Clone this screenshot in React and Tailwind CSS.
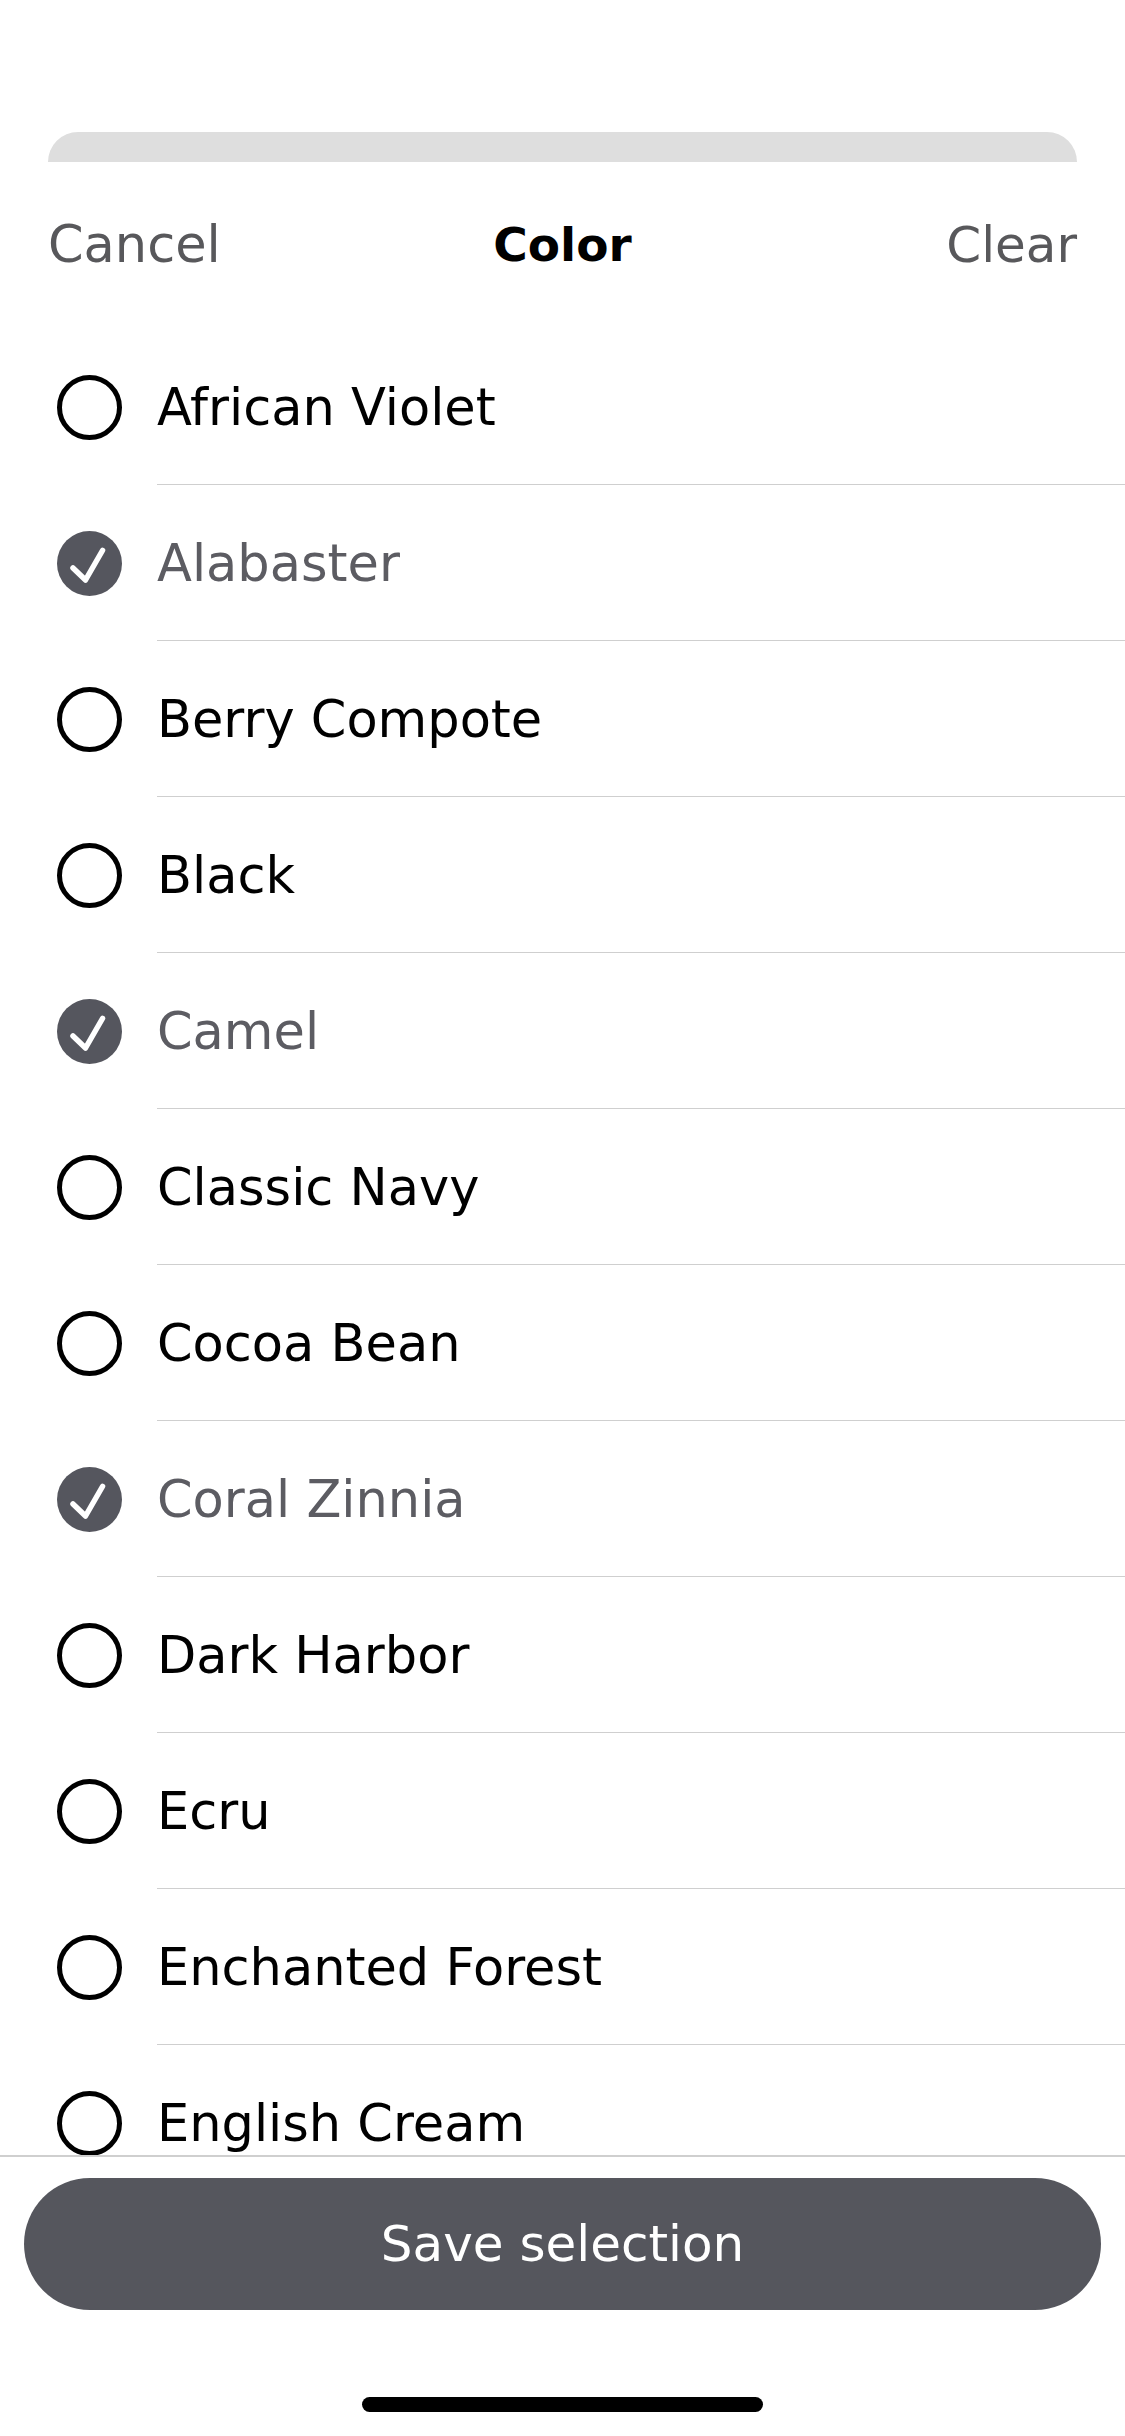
import React, { useState } from 'react';

const colors = [
  { name: 'African Violet', checked: false },
  { name: 'Alabaster', checked: true },
  { name: 'Berry Compote', checked: false },
  { name: 'Black', checked: false },
  { name: 'Camel', checked: true },
  { name: 'Classic Navy', checked: false },
  { name: 'Cocoa Bean', checked: false },
  { name: 'Coral Zinnia', checked: true },
  { name: 'Dark Harbor', checked: false },
  { name: 'Ecru', checked: false },
  { name: 'Enchanted Forest', checked: false },
  { name: 'English Cream', checked: false },
];

const font = { fontFamily: '"DejaVu Sans", "Noto Sans", sans-serif' };

const CheckCircle = ({ checked }) =>
  checked ? (
    <svg width="65" height="65" viewBox="0 0 65 65">
      <circle cx="32.5" cy="32.5" r="32.5" fill="#55565e" />
      <path d="M16 37 L28.5 49 L45.5 19.5" fill="none" stroke="#fff" strokeWidth="5.5" strokeLinecap="round" strokeLinejoin="round" />
    </svg>
  ) : (
    <div className="w-[65px] h-[65px] rounded-full border-[5px] border-black" />
  );

export default function App() {
  const [items, setItems] = useState(colors);

  const toggle = (name) =>
    setItems((prev) => prev.map((c) => (c.name === name ? { ...c, checked: !c.checked } : c)));

  return (
    <div className="w-[1125px] h-[2436px] bg-white flex flex-col overflow-hidden" style={font}>
      {/* top spacer + sheet grabber */}
      <div className="h-[132px] shrink-0" />
      <div className="mx-[48px] h-[30px] shrink-0 rounded-t-[30px] bg-[#dedede]" />

      {/* Header */}
      <div className="h-[167px] shrink-0 px-[48px] grid grid-cols-3 items-center">
        <button className="text-left text-[51px] text-[#58585b]">Cancel</button>
        <p className="text-center text-[47px] font-bold text-black">Color</p>
        <button className="text-right text-[50px] text-[#58585b]">Clear</button>
      </div>

      {/* List */}
      <div className="flex-1 overflow-hidden">
        {items.map((c) => (
          <div key={c.name} onClick={() => toggle(c.name)} className="h-[156px] flex items-stretch">
            <div className="w-[157px] shrink-0 flex items-center pl-[57px]">
              <CheckCircle checked={c.checked} />
            </div>
            <div className="flex-1 flex items-center pt-[3px] border-b border-[#cfcfcf]">
              <span className={`text-[51px] ${c.checked ? 'text-[#5c5c62]' : 'text-black'}`}>{c.name}</span>
            </div>
          </div>
        ))}
      </div>

      {/* Footer */}
      <div className="h-[281px] shrink-0 border-t-2 border-[#cfcfcf] flex flex-col items-center">
        <button className="mt-[21px] w-[1077px] h-[132px] rounded-full bg-[#55565d] text-white text-[50px]">
          Save selection
        </button>
        <div className="mt-[87px] w-[401px] h-[15px] rounded-full bg-black" />
      </div>
    </div>
  );
}
